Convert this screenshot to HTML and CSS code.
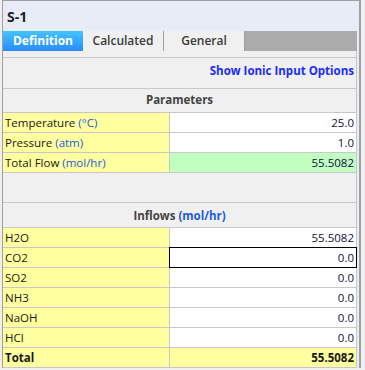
FILE: index.html
```html
<!DOCTYPE html>
<html lang="en">
<head>
    <meta charset="UTF-8">
    <title>S-1</title>
    <link rel="stylesheet" href="styles.css">
</head>
<body>
    <div class="panel">
        <div class="title">S-1</div>
        <div class="tabs">
            <div class="tab active">Definition</div>
            <div class="tab">Calculated</div>
            <div class="tab">General</div>
        </div>
        <div class="content">
            <div class="link-row"><span class="link">Show Ionic Input Options</span></div>

            <div class="section-head">Parameters</div>
            <div class="row"><div class="label">Temperature <span class="unit">(°C)</span></div><div class="value">25.0</div></div>
            <div class="row"><div class="label">Pressure <span class="unit">(atm)</span></div><div class="value">1.0</div></div>
            <div class="row"><div class="label">Total Flow <span class="unit">(mol/hr)</span></div><div class="value calc">55.5082</div></div>

            <div class="spacer"></div>

            <div class="section-head inflow">Inflows <span class="unit">(mol/hr)</span></div>
            <div class="row"><div class="label">H2O</div><div class="value">55.5082</div></div>
            <div class="row"><div class="label">CO2</div><div class="value selected">0.0</div></div>
            <div class="row"><div class="label">SO2</div><div class="value">0.0</div></div>
            <div class="row"><div class="label">NH3</div><div class="value">0.0</div></div>
            <div class="row"><div class="label">NaOH</div><div class="value">0.0</div></div>
            <div class="row"><div class="label">HCl</div><div class="value">0.0</div></div>
            <div class="row total"><div class="label">Total</div><div class="value">55.5082</div></div>
        </div>
    </div>
</body>
</html>
```

FILE: styles.css
```css
body {
    margin: 0;
    background-color: #f0f0f0;
    font-family: "Open Sans", "Noto Sans", sans-serif;
    font-size: 11.5px;
    color: #1a1a1a;
}
.panel {
    margin-left: 2px;
    width: 356px;
    border-left: 1px solid #a0a0a0;
    border-right: 2px solid #a0a0a0;
    border-top: 1px solid #a0a0a0;
    background-color: #e8ecf6;
}
.title {
    height: 30px;
    line-height: 32px;
    padding-left: 4px;
    font-weight: bold;
    font-size: 14px;
    color: #222;
}
.tabs {
    display: flex;
    height: 20px;
    background-color: #ababab;
    margin-right: 2px;
}
.tab {
    width: 80px;
    line-height: 20px;
    text-align: center;
    background-color: #f0f0f0;
    border-right: 1px solid #a0a0a0;
    font-size: 12px;
    font-weight: 600;
    color: #3a3a3a;
}
.tab.active {
    background: linear-gradient(#43c4ff, #2a8cff);
    color: #fff;
    border-right: none;
    font-weight: bold;
}
.content {
    background-color: #f0f0f0;
    margin-right: 2px;
    border-right: 1px solid #c8c8c8;
    padding-top: 6px;
}
.link-row {
    border-top: 1px solid #c8c8c8;
    border-bottom: 1px solid #c8c8c8;
    height: 30px;
    line-height: 26px;
    text-align: right;
    padding-right: 2px;
}
.link {
    color: #1a2cff;
    font-weight: bold;
}
.section-head {
    height: 23px;
    line-height: 21px;
    text-align: center;
    font-weight: bold;
    color: #444;
    border-bottom: 1px solid #c8c8c8;
}
.section-head.inflow {
    height: 24px;
    line-height: 25px;
}
.unit {
    color: #1a5ce0;
}
.row {
    display: grid;
    grid-template-columns: 167px 1fr;
    height: 19px;
    border-bottom: 1px solid #c8c8c8;
}
.label {
    background-color: #ffffa0;
    border-right: 1px solid #c8c8c8;
    padding-left: 2px;
    line-height: 19px;
}
.value {
    background-color: #fff;
    text-align: right;
    padding-right: 2px;
    line-height: 19px;
    color: #101040;
}
.value.calc {
    background-color: #c0ffc0;
}
.value.selected {
    outline: 1px solid #000;
    outline-offset: 0;
}
.row.total {
    font-weight: bold;
}
.row.total .value {
    background-color: #ffffa0;
    color: #1a1a1a;
}
.spacer {
    height: 29px;
    border-bottom: 1px solid #c8c8c8;
}
```
